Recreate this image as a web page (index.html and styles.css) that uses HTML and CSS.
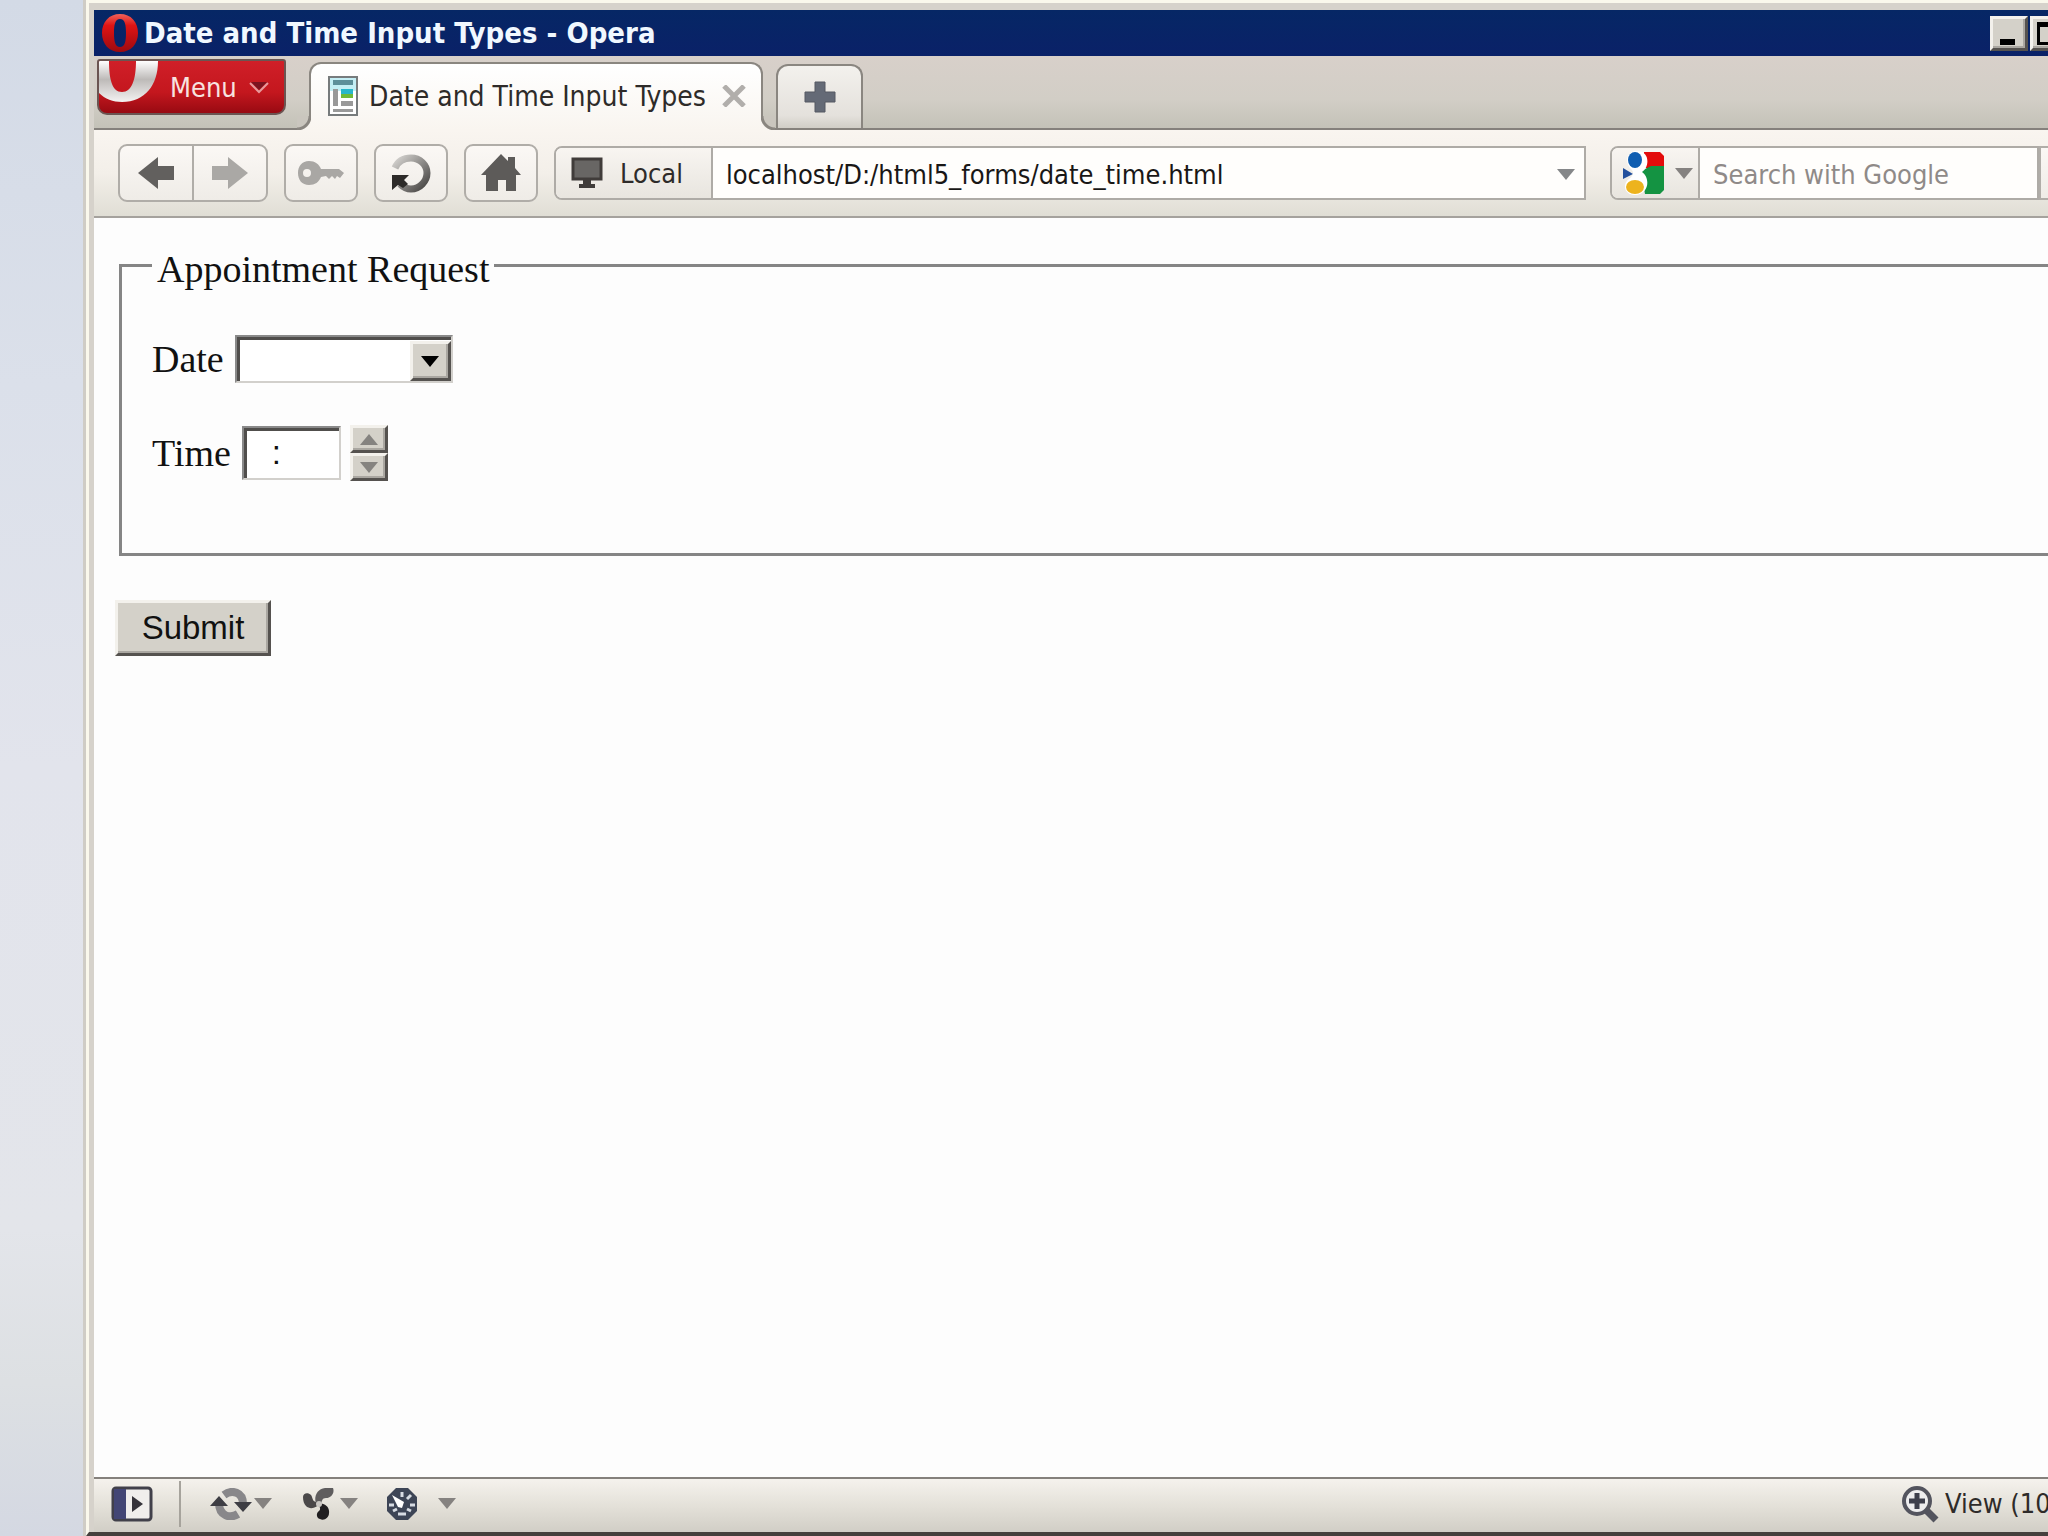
FILE: index.html
```html
<!DOCTYPE html>
<html lang="en">
<head>
<meta charset="utf-8">
<title>Date and Time Input Types</title>
<link rel="stylesheet" href="styles.css">
</head>
<body>
<div class="window">
  <header class="titlebar">
    <svg class="title-logo" width="38" height="40" viewBox="0 0 38 40"><defs><linearGradient id="red" x1="0" y1="0" x2="0" y2="1"><stop offset="0" stop-color="#f0625a"/><stop offset=".3" stop-color="#e01414"/><stop offset="1" stop-color="#9c0a10"/></linearGradient></defs><path fill="url(#red)" fill-rule="evenodd" d="M19 1C8 1 1 9 1 20s7 19 18 19 18-8 18-19S30 1 19 1zm0 5c5 0 6 6 6 14s-1 14-6 14-6-6-6-14 1-14 6-14z"/></svg>
    <h1 class="title-text">Date and Time Input Types - Opera</h1>
    <div class="window-controls">
      <button class="bevel win-btn" aria-label="Minimize"><svg width="30" height="26"><path d="M6 19h15v6H6z"/></svg></button>
      <button class="bevel win-btn" aria-label="Maximize"><svg width="30" height="26"><path fill-rule="evenodd" d="M3 2h23v23H3zM6 7v15h17V7z"/></svg></button>
      <button class="bevel win-btn" aria-label="Close"><svg width="30" height="26"><path stroke="#000" stroke-width="4" d="M6 5l17 17M23 5L6 22"/></svg></button>
    </div>
  </header>

  <nav class="tabstrip">
    <button class="menu-btn">
      <svg class="menu-logo" width="60" height="42" viewBox="0 0 60 42"><defs><linearGradient id="silver" x1="0" y1="0" x2="0" y2="1"><stop offset="0" stop-color="#fff"/><stop offset=".45" stop-color="#bdbab8"/><stop offset="1" stop-color="#f4f2f2"/></linearGradient></defs><path fill="url(#silver)" d="M0 0h10C10 18 13 31 23 31S37 18 37 0h22c0 24-13 41-36 41-9 0-17-3-23-9z"/></svg>
      <span>Menu</span>
      <svg class="menu-arrow" width="20" height="13"><path fill="#7c1420" d="M2 1h16l-8 8z"/><path fill="none" stroke="#e89a9c" stroke-width="2" d="M1 2l9 9 9-9"/></svg>
    </button>
    <div class="tab">
      <svg width="30" height="40" viewBox="0 0 30 40"><path fill="#fff" stroke="#777b7c" stroke-width="2" d="M1 1h28v38H1z"/><path fill="#c4eef4" d="M2 2h26v13H2z"/><path fill="#5d8f99" d="M5 4h20v5H5z"/><path fill="#999" d="M5 13h5v17H5zM13 25h12v5H13zM5 33h20v3H5z"/><path fill="#28b6ca" d="M13 13h12v6H13z"/><path fill="#6fba38" d="M13 18h12v4H13z"/></svg>
      <span>Date and Time Input Types</span>
      <button class="plain" aria-label="Close tab"><svg width="26" height="22"><path fill="none" stroke="#b1aeab" stroke-width="5" d="M3 1l20 20M23 1L3 21"/></svg></button>
    </div>
    <button class="new-tab" aria-label="New tab"><svg width="32" height="32"><path fill="#646a76" stroke="#555962" d="M11 1h10v10h10v10H21v10H11V21H1V11h10z"/></svg></button>
  </nav>

  <div class="toolbar">
    <div class="btn-pair">
      <button class="tool" aria-label="Back"><svg width="36" height="32" viewBox="0 0 36 32"><path fill="#62605e" d="M0 16L20 0v9h16v14H20v9z"/></svg></button>
      <button class="tool" aria-label="Forward"><svg width="36" height="32" viewBox="0 0 36 32"><path fill="#aaa8a5" d="M36 16L16 0v9H0v14h16v9z"/></svg></button>
    </div>
    <button class="tool" aria-label="Password manager"><svg width="48" height="26" viewBox="0 0 48 26"><path fill="#a9a7a4" fill-rule="evenodd" d="M12 1c6 0 10 3 12 8h18l5 4-4 5-3-2-2 3-3-3-3 3-3-3-5 1c-2 5-6 8-12 8C5 25 1 20 1 13S5 1 12 1zm-2 8a4 4 0 100 8 4 4 0 000-8z"/></svg></button>
    <button class="tool" aria-label="Reload"><svg width="40" height="40" viewBox="0 0 40 40"><defs><linearGradient id="rl" x1="0" y1="0" x2="1" y2="1"><stop offset="0" stop-color="#d5d3d0"/><stop offset="1" stop-color="#454341"/></linearGradient></defs><path fill="none" stroke="url(#rl)" stroke-width="7" d="M4 15C7 8 13 5 20 5c9 0 16 7 16 15s-7 16-16 16c-5 0-8-2-11-5"/><path fill="#2d2b29" d="M1 22h17l-5 5 4 4-5 4-5-3-6 5z"/></svg></button>
    <button class="tool" aria-label="Home"><svg width="40" height="38" viewBox="0 0 40 38"><path fill="#5d5b59" d="M0 21L20 0l7 7V3h7v11l6 7h-5v16H25V26h-8v11H5V21z"/></svg></button>
    <div class="address">
      <button class="badge"><svg width="32" height="32" viewBox="0 0 32 32"><path fill="#686664" stroke="#403c3a" stroke-width="3" d="M2 2h28v20H2z"/><path fill="#403c3a" d="M12 23h8v4h4v4H8v-4h4z"/></svg><span>Local</span></button>
      <input class="field" type="text" aria-label="Address" value="localhost/D:/html5_forms/date_time.html">
      <button class="plain drop" aria-label="Show history"><svg width="18" height="11"><path fill="#858789" d="M0 0h18L9 11z"/></svg></button>
    </div>
    <div class="search">
      <button class="badge engine" aria-label="Search engine"><svg width="42" height="44" viewBox="0 0 42 44"><path fill="#e30b0b" d="M21 1h16l4 4v12H21z"/><path fill="#149342" d="M18 20l10-5h13v24l-4 4H22z"/><path fill="#23509c" d="M0 17l10 6-10 5z"/><path fill="#fff" d="M13 0c14-1 14 16 6 21 8 5 8 22-7 23C1 44-1 33 6 28c4-3 5-6 3-9C1 12 3 1 13 0z"/><ellipse cx="12" cy="9" rx="7" ry="8" fill="#105eb1"/><ellipse cx="12" cy="36" rx="9" ry="7" fill="#edb31e"/></svg><svg width="18" height="11"><path fill="#858280" d="M0 0h18L9 11z"/></svg></button>
      <input class="field" type="text" aria-label="Search" placeholder="Search with Google">
    </div>
    <button class="tool search-go" aria-label="Find"></button>
  </div>

  <main class="page">
    <form>
      <fieldset>
        <legend>Appointment Request</legend>
        <div class="row">
          <label for="date">Date</label>
          <div class="sunken combo">
            <input id="date" type="text">
            <button type="button" class="bevel" aria-label="Open calendar"><svg width="18" height="11"><path d="M0 0h18L9 11z"/></svg></button>
          </div>
        </div>
        <div class="row">
          <label for="time">Time</label>
          <input id="time" class="sunken time" type="text" value=":">
          <div class="spinner">
            <button type="button" class="bevel" aria-label="Increase"><svg width="18" height="11"><path fill="#858380" d="M0 11h18L9 0z"/></svg></button>
            <button type="button" class="bevel" aria-label="Decrease"><svg width="18" height="11"><path fill="#858380" d="M0 0h18L9 11z"/></svg></button>
          </div>
        </div>
      </fieldset>
      <button type="button" class="bevel submit">Submit</button>
    </form>
  </main>

  <footer class="statusbar">
    <button class="plain panel" aria-label="Panels"><svg width="42" height="36" viewBox="0 0 42 36"><rect x="2" y="2" width="38" height="32" rx="3" fill="#f0eeec" stroke="#41404a" stroke-width="3"/><path fill="#434675" d="M3 3h12v30H3z"/><path fill="#35333a" d="M21 10l11 8-11 8z"/></svg></button>
    <button class="plain item" aria-label="Synchronize"><svg width="42" height="32" viewBox="0 0 42 32"><path fill="none" stroke="#88878a" stroke-width="8" d="M14 7c8-6 19-3 19 9M28 26C20 31 9 28 9 15"/><path fill="#3e3e44" d="M24 14h18l-9 10zM0 18h18L9 8z"/></svg><svg width="18" height="11"><path fill="#858280" d="M0 0h18L9 11z"/></svg></button>
    <button class="plain item share" aria-label="Share"><svg width="32" height="32" viewBox="0 0 32 32"><path fill="#4a4849" d="M1 9c0-4 5-5 8-2 2 3 1 6 5 7l4 1c-3 5-10 7-14 3-2-2-3-5-3-9z"/><path fill="#5f5d5e" d="M15 17c-4-6-1-16 8-17h8c2 5-2 10-7 10-4 0-4 3-5 6z"/><path fill="#201e20" d="M16 16c6-2 12 3 11 9 0 5-5 8-9 6-4-1-4-6-1-8 2-2 1-4-1-7z"/><circle cx="17" cy="16" r="3" fill="#c9c6c2"/></svg><svg width="18" height="11"><path fill="#858280" d="M0 0h18L9 11z"/></svg></button>
    <button class="plain item turbo" aria-label="Turbo"><svg width="32" height="32" viewBox="0 0 32 32"><path fill="#3d4556" d="M10 0h12l9 9v14l-9 9H10l-9-9V9z"/><path stroke="#d7dce3" stroke-width="3" d="M16 4v5M3 17h5M24 17h5M21 11l4-4M7 23l4-2M25 23l-4-2M12 26h8"/><path fill="#fff" d="M6 7l12 7-2 6-4-1z"/></svg><svg width="18" height="11"><path fill="#858280" d="M0 0h18L9 11z"/></svg></button>
    <button class="plain view"><svg width="38" height="38" viewBox="0 0 38 38"><circle cx="16" cy="16" r="13" fill="#ededee" stroke="#53545e" stroke-width="4"/><path fill="none" stroke="#3d3f4c" stroke-width="5" d="M16 8v16M8 16h16"/><path stroke="#53545e" stroke-width="7" d="M26 26l9 9"/></svg><span>View (100%)</span></button>
  </footer>
</div>
</body>
</html>
```
FILE: styles.css
```css
* { box-sizing: border-box; }

body {
  margin: 0;
  height: 100vh;
  padding-left: 86px;
  overflow: hidden;
  background: linear-gradient(#d3dae6 0%, #dbe0ea 25%, #e2e4ec 50%, #e3e5ea 80%, #dde0e3 90%, #d4d8e2 100%);
  font-family: "DejaVu Sans Condensed", "DejaVu Sans", sans-serif;
  font-size: 27px;
  color: #2e2b29;
}

button, input {
  margin: 0;
  padding: 0;
  border: 0;
  font: inherit;
  color: inherit;
}

svg { display: block; flex: none; }

.plain { background: none; }

/* the window hangs over the right edge of the desktop */
.window {
  display: flex;
  flex-direction: column;
  height: 100vh;
  margin-right: -80px;
  padding: 7px 6px 0 5px;
  background: #d6d2cb;
  border: 3px solid #faf8ec;
  border-bottom: 4px solid #45403d;
  box-shadow: 0 0 0 3px #cfccc5;
}

.bevel {
  display: flex;
  align-items: center;
  justify-content: center;
  background: #d4d1c9;
  border: 3px solid;
  border-color: #f3f1ec #55524f #55524f #f3f1ec;
  box-shadow: inset -2px -2px 0 #aaa7a1;
}

.titlebar {
  display: flex;
  align-items: center;
  height: 46px;
  padding: 0 9px 0 7px;
  background: linear-gradient(#062765, #0a2168);
}

.title-text {
  flex: 1;
  margin: 0 0 0 5px;
  font-size: 29px;
  line-height: 40px;
  font-weight: bold;
  color: #f0f8ff;
}

.window-controls { display: flex; gap: 2px; }
.window-controls .win-btn:last-child { margin-left: 2px; }
.win-btn { width: 38px; height: 35px; }

.tabstrip {
  display: flex;
  align-items: flex-end;
  height: 74px;
  background: linear-gradient(#d8d0ca, #d2cec6 60%, #c4c2b8);
  border-bottom: 2px solid #85817c;
}

.menu-btn {
  display: flex;
  align-items: center;
  align-self: flex-start;
  width: 189px;
  height: 56px;
  margin: 3px 23px 0 3px;
  overflow: hidden;
  color: #f7e3e0;
  background: linear-gradient(#d01f28, #c4171e 60%, #980a12);
  border: 2px solid #6b5552;
  border-radius: 3px 3px 10px 10px;
}
.menu-logo { align-self: flex-start; }
.menu-btn span { margin: 0 12px 0 11px; }

.tab {
  position: relative;
  display: flex;
  align-items: center;
  width: 454px;
  height: 68px;
  margin-bottom: -2px;
  padding: 0 14px 2px 17px;
  background: linear-gradient(#fff, #f9f5f0);
  border: 2px solid #8a8680;
  border-bottom: 0;
  border-radius: 12px 12px 0 0;
  font-size: 28px;
}
.tab span { flex: 1; margin-left: 11px; white-space: nowrap; }
.tab::before, .tab::after {
  content: "";
  position: absolute;
  bottom: 0;
  width: 14px;
  height: 14px;
}
.tab::before {
  left: -14px;
  background: radial-gradient(circle at 0 0, #cac6be 11px, #8a8680 12px, #8a8680 14px, #f9f5f0 15px);
}
.tab::after {
  right: -14px;
  background: radial-gradient(circle at 100% 0, #cac6be 11px, #8a8680 12px, #8a8680 14px, #f9f5f0 15px);
}

.new-tab {
  display: flex;
  align-items: center;
  justify-content: center;
  width: 87px;
  height: 64px;
  margin-left: 13px;
  background: linear-gradient(#f3f1ed, #e4e1dc 80%, #d0cdc6);
  border: 2px solid #8a8680;
  border-bottom: 0;
  border-radius: 12px 12px 0 0;
}

.toolbar {
  display: flex;
  align-items: center;
  gap: 16px;
  height: 88px;
  padding: 0 6px 0 24px;
  background: linear-gradient(#f9f5f0, #f3efe9 50%, #e0ded5);
  border-bottom: 2px solid #a5a29d;
}

.tool {
  display: flex;
  align-items: center;
  justify-content: center;
  width: 74px;
  height: 58px;
  background: linear-gradient(#fbf8f5, #efece7);
  border: 2px solid #b0ada8;
  border-radius: 9px;
}

.btn-pair { display: flex; }
.btn-pair .tool { width: 76px; }
.btn-pair .tool:first-child { border-radius: 9px 0 0 9px; }
.btn-pair .tool:last-child { margin-left: -2px; border-radius: 0 9px 9px 0; }

.address, .search {
  display: flex;
  align-items: center;
  height: 54px;
  background: #fffefc;
  border: 2px solid #aeaba6;
  border-radius: 8px 0 0 8px;
}
.address { flex: 1; }
.search { width: 429px; margin-left: 8px; }

.badge {
  display: flex;
  align-items: center;
  gap: 17px;
  width: 157px;
  height: 50px;
  padding-left: 15px;
  background: linear-gradient(#f8f5f1, #e8e5df);
  border-right: 2px solid #aeaba6;
  border-radius: 6px 0 0 6px;
}
.engine { gap: 10px; width: 88px; padding-left: 11px; }

.field {
  flex: 1;
  min-width: 0;
  height: 50px;
  padding: 2px 0 0 13px;
  background: none;
  color: #191716;
}
.field::placeholder { color: #8f8a88; opacity: 1; }
.drop { padding: 2px 9px 0; }
.search-go { margin-left: -16px; height: 54px; border-radius: 0; }

.page {
  flex: 1;
  padding: 22px 24px 0 21px;
  background: #fdfdfd;
  color: #111;
  font-family: "Liberation Serif", "Times New Roman", serif;
  font-size: 38px;
}

fieldset {
  min-width: 0;
  margin: 0 0 44px 4px;
  padding: 40px 30px 72px 30px;
  border: 3px solid #858585;
}
legend { padding: 7px 5px 0; line-height: 44px; }

.row { display: flex; align-items: center; height: 56px; }
.row + .row { margin-top: 38px; }
label { margin-right: 11px; line-height: 44px; }

.sunken {
  background: #fff;
  border: 2px solid;
  border-color: #8a8a8a #d2d0cc #d2d0cc #8a8a8a;
  box-shadow: inset 3px 3px 0 #504e4c;
}
.combo { display: flex; width: 218px; height: 48px; padding: 4px 0 0 4px; }
.combo input { flex: 1; min-width: 0; background: none; font-size: 30px; }
.combo .bevel { width: 41px; }
.time { width: 99px; height: 54px; padding-left: 28px; font-family: "Liberation Sans", Arial, sans-serif; font-size: 33px; }
.spinner { display: flex; flex-direction: column; width: 38px; margin-left: 9px; }
.spinner .bevel { height: 28px; }

.submit {
  width: 156px;
  height: 56px;
  font-family: "Liberation Sans", Arial, sans-serif;
  font-size: 33px;
}

.statusbar {
  display: flex;
  align-items: center;
  height: 55px;
  padding: 0 16px 4px 17px;
  background: linear-gradient(#f5f2ed, #e4e1d9 50%, #d1cec6);
  border-top: 2px solid #85817c;
}
.panel { display: flex; align-items: center; height: 46px; padding-right: 26px; border-right: 2px solid #a6a39c; }
.item { display: flex; align-items: center; gap: 2px; margin-left: 29px; }
.item + .share { gap: 6px; margin-left: 30px; }
.item + .turbo { gap: 20px; margin-left: 28px; }
.view { display: flex; align-items: center; gap: 6px; width: 202px; margin-left: auto; white-space: nowrap; }
```
